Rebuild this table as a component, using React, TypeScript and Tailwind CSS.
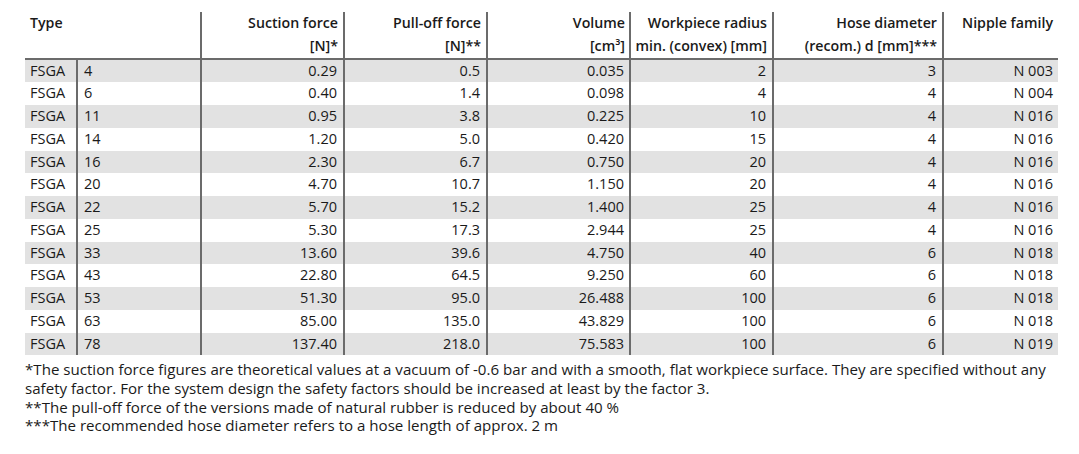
import React from "react";

const rows: [string, string, string, string, string, string, string][] = [
  ["4", "0.29", "0.5", "0.035", "2", "3", "N 003"],
  ["6", "0.40", "1.4", "0.098", "4", "4", "N 004"],
  ["11", "0.95", "3.8", "0.225", "10", "4", "N 016"],
  ["14", "1.20", "5.0", "0.420", "15", "4", "N 016"],
  ["16", "2.30", "6.7", "0.750", "20", "4", "N 016"],
  ["20", "4.70", "10.7", "1.150", "20", "4", "N 016"],
  ["22", "5.70", "15.2", "1.400", "25", "4", "N 016"],
  ["25", "5.30", "17.3", "2.944", "25", "4", "N 016"],
  ["33", "13.60", "39.6", "4.750", "40", "6", "N 018"],
  ["43", "22.80", "64.5", "9.250", "60", "6", "N 018"],
  ["53", "51.30", "95.0", "26.488", "100", "6", "N 018"],
  ["63", "85.00", "135.0", "43.829", "100", "6", "N 018"],
  ["78", "137.40", "218.0", "75.583", "100", "6", "N 019"],
];

export default function App() {
  const vl = "border-r-2 border-r-[#6b6b6b]";
  return (
    <div
      className="w-[1079px] h-[454px] bg-white text-[#1a1a1a] pt-[12px] pl-[25px]"
      style={{ fontFamily: '"Open Sans", "Noto Sans", sans-serif' }}
    >
      <table className="table-fixed border-collapse w-[1033px] text-[14.5px] leading-[22.75px]">
        <colgroup>
          <col className="w-[52px]" />
          <col className="w-[124px]" />
          <col className="w-[143px]" />
          <col className="w-[143px]" />
          <col className="w-[143px]" />
          <col className="w-[143px]" />
          <col className="w-[170px]" />
          <col className="w-[115px]" />
        </colgroup>
        <thead>
          <tr className="border-b-2 border-b-[#6b6b6b] font-semibold text-[14.2px]">
            <th colSpan={2} className={`text-left align-top pl-[5px] pt-0 h-[45px] font-semibold ${vl}`}>
              Type
            </th>
            <th className={`text-right align-top pr-[5px] font-semibold ${vl}`}>
              Suction force
              <br />
              [N]*
            </th>
            <th className={`text-right align-top pr-[5px] font-semibold ${vl}`}>
              Pull-off force
              <br />
              [N]**
            </th>
            <th className={`text-right align-top pr-[4px] font-semibold ${vl}`}>
              Volume
              <br />
              [cm³]
            </th>
            <th className={`text-right align-top pr-[5px] font-semibold ${vl}`}>
              Workpiece radius
              <br />
              min. (convex) [mm]
            </th>
            <th className={`text-right align-top pr-[5px] font-semibold ${vl}`}>
              Hose diameter
              <br />
              (recom.) d [mm]***
            </th>
            <th className="text-right align-top pr-[5px] font-semibold">Nipple family</th>
          </tr>
        </thead>
        <tbody>
          {rows.map((r, i) => (
            <tr key={i} className={i % 2 === 0 ? "bg-[#e2e2e2] h-[22.75px]" : "bg-white h-[22.75px]"}>
              <td className={`pl-[5px] p-0 ${vl}`}>FSGA</td>
              <td className={`pl-[6px] ${vl}`}>{r[0]}</td>
              <td className={`text-right pr-[6px] ${vl}`}>{r[1]}</td>
              <td className={`text-right pr-[6px] ${vl}`}>{r[2]}</td>
              <td className={`text-right pr-[5px] ${vl}`}>{r[3]}</td>
              <td className={`text-right pr-[6px] ${vl}`}>{r[4]}</td>
              <td className={`text-right pr-[6px] ${vl}`}>{r[5]}</td>
              <td className="text-right pr-[5px]">{r[6]}</td>
            </tr>
          ))}
        </tbody>
      </table>
      <div className="text-[15.1px] leading-[18.7px] whitespace-nowrap mt-[5px]">
        <div>
          *The suction force figures are theoretical values at a vacuum of -0.6 bar and with a smooth, flat workpiece surface. They are specified without any
        </div>
        <div>safety factor. For the system design the safety factors should be increased at least by the factor 3.</div>
        <div>**The pull-off force of the versions made of natural rubber is reduced by about 40 %</div>
        <div>***The recommended hose diameter refers to a hose length of approx. 2 m</div>
      </div>
    </div>
  );
}
